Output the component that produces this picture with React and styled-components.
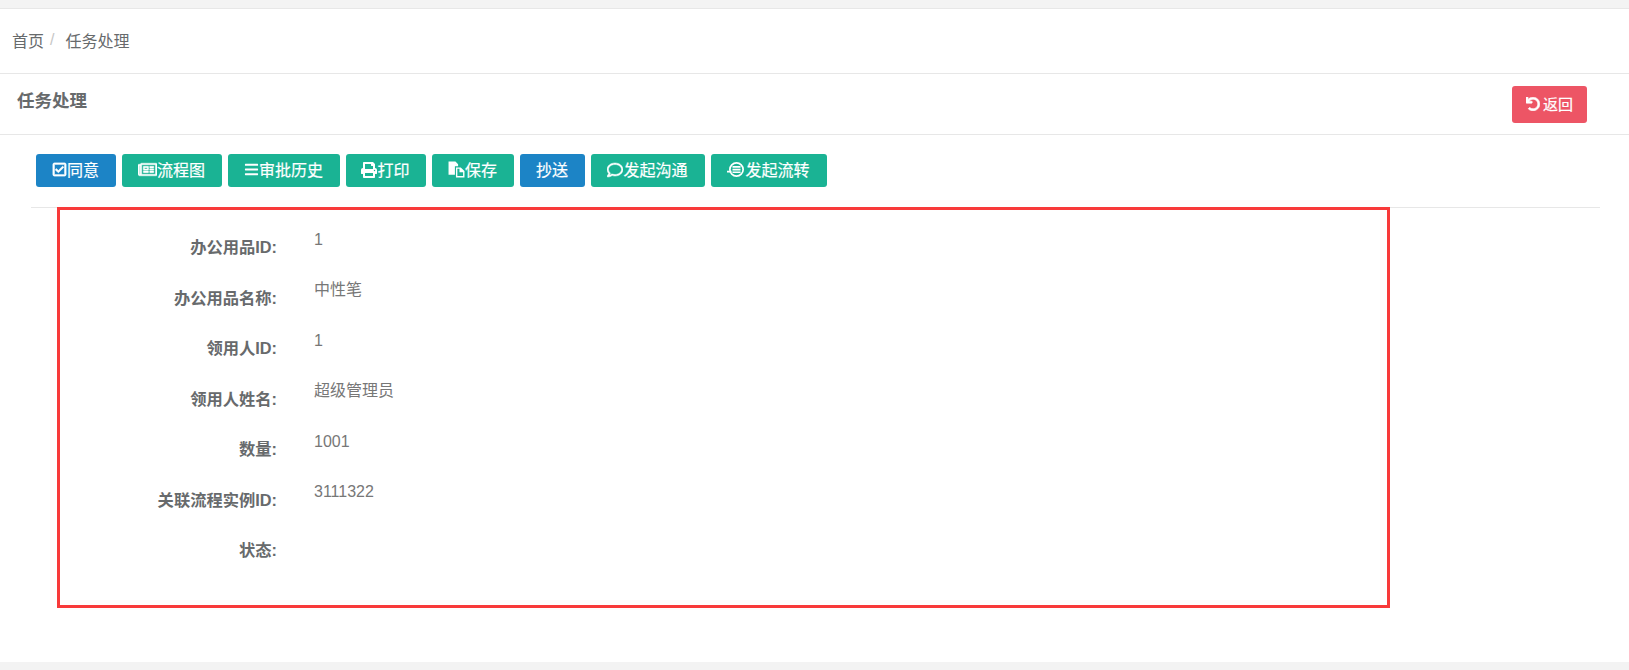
import React from "react";
import styled, { createGlobalStyle } from "styled-components";
import {
  FaRegCheckSquare,
  FaRegNewspaper,
  FaBars,
  FaPrint,
  FaRegComment,
  FaUndo,
} from "react-icons/fa";

const GlobalStyle = createGlobalStyle`
  html, body {
    margin: 0;
    padding: 0;
    background: #fff;
  }
  body {
    font-family: "Liberation Sans", "Noto Sans CJK SC", sans-serif;
    font-size: 16px;
    color: #676a6c;
  }
`;

const FilesIcon = () => (
  <svg width="17" height="17" viewBox="0 0 16 16" fill="currentColor">
    <path d="M0.5 0.5h6.5l2.5 2.5v2H6.5v8H0.5z" />
    <path d="M7.5 6H12l3.5 3.5v6H7.5zM8.8 7.3v6.9h5.4V10.5h-3.4V7.3z" />
  </svg>
);

const FlowIcon = () => (
  <svg width="18" height="17" viewBox="0 0 18 17" fill="currentColor">
    <path d="M9.5 1a7.5 7.5 0 1 1 0 15 7.5 7.5 0 0 1 0-15zm0 1.7a5.8 5.8 0 1 0 0 11.6 5.8 5.8 0 0 0 0-11.6z" />
    <path d="M0 9.8h4.5v1.6H0zM5.5 5h8v1.7h-8zM5.5 7.7h8v1.7h-8zM5.5 10.4h8v1.7h-8z" />
  </svg>
);

const buttons = [
  { text: "同意", icon: <FaRegCheckSquare size={15} strokeWidth={24} />, blue: true, width: 80 },
  { text: "流程图", icon: <FaRegNewspaper size={19} strokeWidth={12} />, width: 100 },
  { text: "审批历史", icon: <FaBars size={15} />, width: 112 },
  { text: "打印", icon: <FaPrint size={16} />, width: 80 },
  { text: "保存", icon: <FilesIcon />, width: 82 },
  { text: "抄送", blue: true, width: 65 },
  { text: "发起沟通", icon: <FaRegComment size={16} strokeWidth={16} />, width: 114 },
  { text: "发起流转", icon: <FlowIcon />, width: 116 },
];

const fields = [
  { label: "办公用品ID:", value: "1" },
  { label: "办公用品名称:", value: "中性笔" },
  { label: "领用人ID:", value: "1" },
  { label: "领用人姓名:", value: "超级管理员" },
  { label: "数量:", value: "1001" },
  { label: "关联流程实例ID:", value: "3111322" },
  { label: "状态:", value: "" },
];

const App = () => {
  return (
    <Page>
      <GlobalStyle />
      <TopStrip />
      <Breadcrumb>
        <Crumb>首页</Crumb>
        <Slash>/</Slash>
        <Crumb>任务处理</Crumb>
      </Breadcrumb>
      <TitleBar>
        <Title>任务处理</Title>
        <BackButton>
          <FaUndo strokeWidth={24} />
          返回
        </BackButton>
      </TitleBar>
      <Content>
        <Toolbar>
          {buttons.map((b) => (
            <ActionButton key={b.text} $blue={b.blue} $width={b.width}>
              {b.icon}
              {b.text}
            </ActionButton>
          ))}
        </Toolbar>
        <Divider />
        <FormBox>
          {fields.map((f) => (
            <FormRow key={f.label}>
              <Label>{f.label}</Label>
              <Value>{f.value}</Value>
            </FormRow>
          ))}
        </FormBox>
      </Content>
      <BottomStrip />
    </Page>
  );
};

const Page = styled.div`
  height: 670px;
  overflow: hidden;
  display: flex;
  flex-direction: column;
`;

const TopStrip = styled.div`
  height: 8px;
  background: #f3f3f3;
  border-bottom: 1px solid #e7e7e7;
`;

const Breadcrumb = styled.div`
  box-sizing: border-box;
  height: 65px;
  padding: 0 0 3px 12px;
  display: flex;
  align-items: center;
  border-bottom: 1px solid #e7e7e7;
`;

const Crumb = styled.span`
  color: #676a6c;
`;

const Slash = styled.span`
  color: #c6c6c6;
  margin: 0 11px 0 6px;
`;

const TitleBar = styled.div`
  height: 60px;
  padding: 0 42px 0 17px;
  display: flex;
  justify-content: space-between;
  align-items: flex-start;
  border-bottom: 1px solid #e7e7e7;
`;

const Title = styled.h2`
  margin: 15px 0 0;
  font-size: 17.5px;
  line-height: 24px;
  font-weight: 700;
  color: #676a6c;
`;

const BackButton = styled.button`
  margin-top: 12px;
  width: 75px;
  height: 37px;
  padding: 0 0 2px;
  border: none;
  border-radius: 3px;
  background: #ed5565;
  color: #fff;
  font: inherit;
  font-size: 15px;
  -webkit-text-stroke: 0.2px #fff;
  display: flex;
  align-items: center;
  justify-content: center;
  gap: 3px;
  svg {
    width: 14px;
    height: 14px;
  }
`;

const Content = styled.div`
  flex: 1;
  padding: 19px 29px 0 31px;
`;

const Toolbar = styled.div`
  display: flex;
  gap: 6px;
  padding-left: 5px;
  height: 34px;
`;

const ActionButton = styled.button`
  box-sizing: border-box;
  width: ${(p) => p.$width}px;
  height: 33px;
  padding: 0 1px 3px 0;
  border: none;
  border-radius: 3px;
  background: ${(p) => (p.$blue ? "#1c84c6" : "#1ab394")};
  color: #fff;
  font: inherit;
  -webkit-text-stroke: 0.2px #fff;
  display: flex;
  align-items: center;
  justify-content: center;
  gap: 0;
  svg {
    flex: none;
    margin-top: 1px;
  }
`;

const Divider = styled.div`
  margin-top: 19px;
  height: 1px;
  background: #e7e7e7;
`;

const FormBox = styled.div`
  box-sizing: border-box;
  width: 1333px;
  height: 401px;
  margin: -1px 0 0 26px;
  padding-top: 15px;
  border: 3px solid #f83a3a;
`;

const FormRow = styled.div`
  height: 50.5px;
  display: grid;
  grid-template-columns: 217px 1fr;
  column-gap: 37px;
`;

const Label = styled.label`
  padding-top: 10px;
  line-height: 24px;
  font-size: 16.3px;
  text-align: right;
  font-weight: 700;
  color: #676a6c;
`;

const Value = styled.div`
  line-height: 24px;
  margin-top: 2.5px;
  color: #777;
`;

const BottomStrip = styled.div`
  height: 8px;
  background: #f3f3f3;
`;

export default App;
